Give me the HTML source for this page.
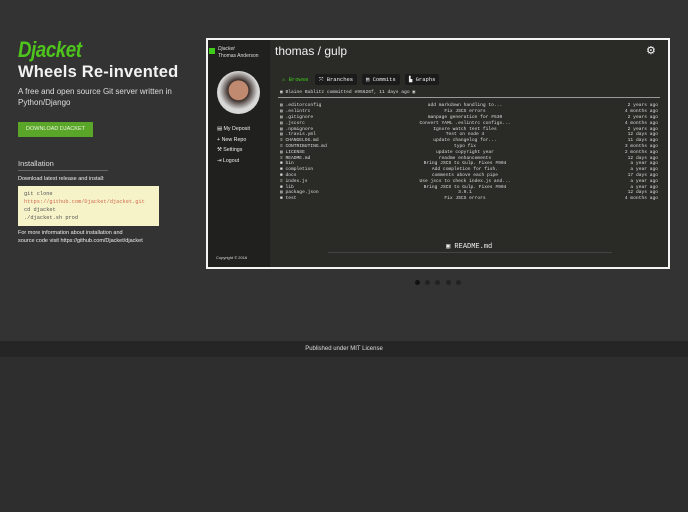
<!DOCTYPE html><html><head><style>
*{margin:0;padding:0;box-sizing:border-box}
body{width:688px;height:512px;background:#2e2e2e;font-family:"Liberation Sans",sans-serif;position:relative;overflow:hidden;color:#eee}
.top{position:absolute;left:0;top:0;width:688px;height:341px;background:#333}
.a{position:absolute;white-space:nowrap}
.foot{position:absolute;left:0;top:341px;width:688px;height:16px;background:#252525;font-size:6px;color:#ddd;text-align:center;line-height:16px}
.frame{position:absolute;left:206px;top:38px;width:464px;height:231px;border:2px solid #f4f4f4;background:#2a2a26;overflow:hidden}
.side{position:absolute;left:0;top:0;width:62px;height:100%;background:#20201e}
.mono{font-family:"Liberation Mono",monospace}
.row{position:absolute;left:72px;width:378px;height:6px;font-size:4.6px;color:#ddd;line-height:6px}
.row .n{position:absolute;left:0}.row .m{position:absolute;left:95px;width:180px;text-align:center}.row .t{position:absolute;right:0}
.tab{position:absolute;top:34px;height:11px;background:#1b1b1b;border-radius:2px;font-size:5.5px;line-height:11px;padding:0 4px;color:#eee}
.dot{position:absolute;top:280px;width:5px;height:5px;border-radius:50%;background:#222}
</style></head><body>
<div class="top"></div>
<div class="a" style="left:18px;top:37px;font-size:22px;font-style:italic;color:#4ec41c;font-weight:bold;letter-spacing:-0.5px;transform:scaleX(0.85);transform-origin:left">Djacket</div>
<div class="a" style="left:18px;top:63px;font-size:16.5px;font-weight:bold;color:#f2f2f2;letter-spacing:0.2px">Wheels Re-invented</div>
<div class="a" style="left:18px;top:87px;font-size:8px;color:#ddd;line-height:10.5px">A free and open source Git server written in<br>Python/Django</div>
<div class="a" style="left:18px;top:122px;width:75px;height:15px;background:#5aa629;font-size:5.5px;color:#e8f5dd;text-align:center;line-height:15px">DOWNLOAD DJACKET</div>
<div class="a" style="left:18px;top:159px;font-size:7.5px;color:#ddd">Installation</div>
<div class="a" style="left:18px;top:170px;width:90px;height:1px;background:#666"></div>
<div class="a" style="left:18px;top:176px;font-size:5.5px;color:#eee">Download latest release and install:</div>
<div class="a mono" style="left:18px;top:186px;width:141px;height:40px;background:#f6f3c8;font-size:5.3px;color:#555;padding:4px 6px;line-height:8px">git clone<br><span style="color:#d06a50">https://github.com/Djacket/djacket.git</span><br>cd djacket<br>./djacket.sh prod</div>
<div class="a" style="left:18px;top:229px;font-size:5.5px;color:#eee;line-height:8px">For more information about installation and<br>source code visit https://github.com/Djacket/djacket</div>

<div class="frame">
 <div class="side">
  <div class="a" style="left:1px;top:8px;width:6px;height:6px;background:#3fcc1c"></div>
  <div class="a" style="left:10px;top:7px;font-size:5px;line-height:5.5px;color:#ddd;font-style:italic">Djacket</div>
  <div class="a" style="left:10px;top:12.5px;font-size:5px;color:#ddd">Thomas Anderson</div>
  <div class="a" style="left:9px;top:31px;width:43px;height:43px;border-radius:50%;background:radial-gradient(circle at 50% 45%,#c08a70 0 30%,#3a2d28 32%,#d8d8d8 60%)"></div>
  <div class="a" style="left:9px;top:84px;font-size:5.3px;color:#eee;line-height:10.5px">▤ My Deposit<br>+ New Repo<br>⚒ Settings<br>⇥ Logout</div>
  <div class="a" style="left:8px;top:215px;font-size:4px;color:#ddd">Copyright © 2016</div>
 </div>
 <div class="a" style="left:67px;top:4px;font-size:12px;color:#f2f2f2">thomas / gulp</div>
 <div class="a" style="left:438px;top:4px;font-size:11px;color:#fff">⚙</div>
 <div class="tab mono" style="left:70px;color:#3fcc1c;background:none">⚠ Browse</div>
 <div class="tab mono" style="left:107px">⤧ Branches</div>
 <div class="tab mono" style="left:154px">▤ Commits</div>
 <div class="tab mono" style="left:197px">▙ Graphs</div>
 <div class="a mono" style="left:72px;top:50px;font-size:4.6px;color:#ddd">▣ Blaine Bublitz committed e95626f, 11 days ago ▣</div>
 <div class="a" style="left:70px;top:57px;width:382px;height:1px;background:#999"></div>
 <div class="mono" style="position:absolute;left:0;top:1.5px">
 <div class="row" style="top:61px"><span class="n">▤ .editorconfig</span><span class="m">add markdown handling to...</span><span class="t">2 years ago</span></div>
 <div class="row" style="top:67px"><span class="n">▤ .eslintrc</span><span class="m">Fix JSCS errors</span><span class="t">4 months ago</span></div>
 <div class="row" style="top:73px"><span class="n">▤ .gitignore</span><span class="m">manpage generation for #530</span><span class="t">2 years ago</span></div>
 <div class="row" style="top:79px"><span class="n">▤ .jscsrc</span><span class="m">Convert YAML .eslintrc configs...</span><span class="t">4 months ago</span></div>
 <div class="row" style="top:85px"><span class="n">▤ .npmignore</span><span class="m">Ignore watch test files</span><span class="t">2 years ago</span></div>
 <div class="row" style="top:90.5px"><span class="n">▤ .travis.yml</span><span class="m">Test on node 4</span><span class="t">12 days ago</span></div>
 <div class="row" style="top:96px"><span class="n">≡ CHANGELOG.md</span><span class="m">update changelog for...</span><span class="t">11 days ago</span></div>
 <div class="row" style="top:102px"><span class="n">≡ CONTRIBUTING.md</span><span class="m">typo fix</span><span class="t">3 months ago</span></div>
 <div class="row" style="top:108px"><span class="n">▤ LICENSE</span><span class="m">update copyright year</span><span class="t">2 months ago</span></div>
 <div class="row" style="top:114px"><span class="n">≡ README.md</span><span class="m">readme enhancements</span><span class="t">12 days ago</span></div>
 <div class="row" style="top:119.5px"><span class="n">■ bin</span><span class="m">Bring JSCS to Gulp. Fixes #904</span><span class="t">a year ago</span></div>
 <div class="row" style="top:125px"><span class="n">■ completion</span><span class="m">Add completion for fish.</span><span class="t">a year ago</span></div>
 <div class="row" style="top:131px"><span class="n">■ docs</span><span class="m">comments above each pipe</span><span class="t">17 days ago</span></div>
 <div class="row" style="top:137px"><span class="n">≡ index.js</span><span class="m">Use jscs to check index.js and...</span><span class="t">a year ago</span></div>
 <div class="row" style="top:143px"><span class="n">■ lib</span><span class="m">Bring JSCS to Gulp. Fixes #904</span><span class="t">a year ago</span></div>
 <div class="row" style="top:148.5px"><span class="n">▤ package.json</span><span class="m">3.9.1</span><span class="t">12 days ago</span></div>
 <div class="row" style="top:154px"><span class="n">■ test</span><span class="m">Fix JSCS errors</span><span class="t">4 months ago</span></div>
 </div>
 <div class="a" style="left:238px;top:202px;font-size:7px;color:#eee;font-family:'Liberation Mono',monospace">▣ README.md</div>
 <div class="a" style="left:120px;top:212px;width:284px;height:1px;background:#444"></div>
</div>
<div class="dot" style="left:415px;background:#111"></div>
<div class="dot" style="left:425px"></div>
<div class="dot" style="left:435px"></div>
<div class="dot" style="left:446px"></div>
<div class="dot" style="left:456px"></div>
<div class="foot">Published under MIT License</div>
</body></html>
